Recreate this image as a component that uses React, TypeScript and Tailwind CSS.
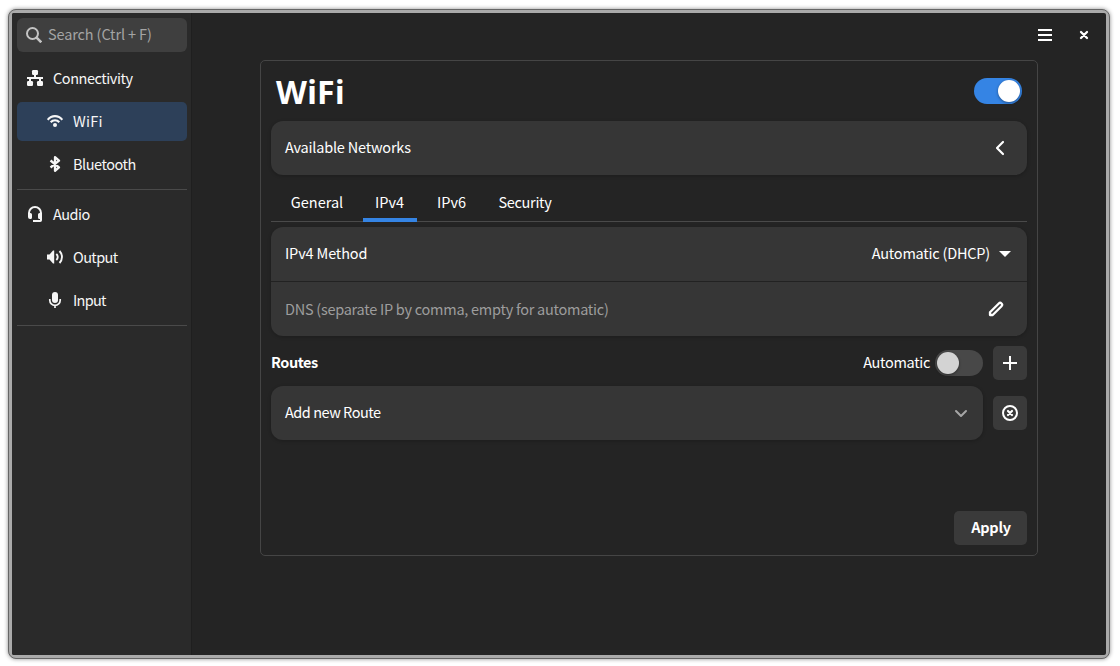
import React from 'react';

type IconProps = { children: React.ReactNode; className?: string; size?: number };

function Icon({ children, className = '', size = 16 }: IconProps) {
  return (
    <svg width={size} height={size} viewBox="0 0 16 16" fill="currentColor" className={`shrink-0 ${className}`}>
      {children}
    </svg>
  );
}

const stroke = { fill: 'none', stroke: 'currentColor' } as const;

const SearchIcon = () => (
  <Icon className="text-[#c4c4c4]">
    <g {...stroke} strokeWidth="2">
      <circle cx="6.5" cy="6.5" r="5.5" />
      <path d="M10.6 10.6 15.3 15.3" strokeWidth="2.6" />
    </g>
  </Icon>
);

const NetworkIcon = () => (
  <Icon>
    <rect x="5" y="0" width="6" height="5" rx="1.2" />
    <rect x="0" y="11" width="6" height="5" rx="1.2" />
    <rect x="10" y="11" width="6" height="5" rx="1.2" />
    <path d="M7 4h2v3h7v2h-2v3h-2V9H4v3H2V9H0V7h7z" />
  </Icon>
);

const WifiIcon = () => (
  <Icon>
    <path {...stroke} strokeWidth="2.1" d="M.7 6.8C4.6 1.9 11.4 1.9 15.3 6.8M3.7 9.3c2.3-2.7 6.3-2.7 8.6 0" />
    <circle cx="8" cy="12" r="2" />
  </Icon>
);

const BluetoothIcon = () => (
  <Icon>
    <path {...stroke} strokeWidth="2.3" strokeLinejoin="round" d="M3.5 4.5 12 11.3 8 14.8V1.2l4 3.5-8.5 6.8" />
  </Icon>
);

const HeadsetIcon = () => (
  <Icon>
    <path {...stroke} strokeWidth="2" d="M2 9V7a6 6 0 0 1 12 0v7.2a.8.8 0 0 1-.8.8H6" />
    <path d="M1 7h2.5A1.5 1.5 0 0 1 5 8.5v3A1.5 1.5 0 0 1 3.5 13H3a2 2 0 0 1-2-2zM15 7h-2.5A1.5 1.5 0 0 0 11 8.5v3a1.5 1.5 0 0 0 1.5 1.5H15z" />
  </Icon>
);

const SpeakerIcon = () => (
  <Icon>
    <path d="M0 5.5h2.5L6 1.5h1.2v13H6l-3.5-4H0z" />
    <path {...stroke} strokeWidth="1.9" d="M9.3 5c1.9 1.8 1.9 4.2 0 6M12.500 2c3.3 3.5 3.3 8.5 0 12" />
  </Icon>
);

const MicIcon = () => (
  <Icon>
    <rect x="5" y="0" width="6" height="11" rx="3" />
    <path {...stroke} strokeWidth="1.7" d="M2.8 7v1.2a5.2 5.2 0 0 0 10.4 0V7M8 13v3" />
  </Icon>
);

const MenuIcon = () => (
  <Icon>
    <path d="M1 2h14v2H1zM1 7h14v2H1zM1 12h14v2H1z" />
  </Icon>
);

const CloseIcon = () => (
  <Icon>
    <path {...stroke} strokeWidth="2.3" strokeLinecap="round" d="m5 5 6 6M11 5l-6 6" />
  </Icon>
);

const ChevronLeftIcon = () => (
  <Icon>
    <path {...stroke} strokeWidth="2.2" strokeLinecap="round" strokeLinejoin="round" d="M11 2 5 8l6 6" />
  </Icon>
);

const CaretIcon = () => (
  <Icon>
    <path d="M2 5h12l-6 6z" />
  </Icon>
);

const PencilIcon = () => (
  <Icon>
    <path {...stroke} strokeWidth="2.3" strokeLinejoin="round" d="M2 14v-2.7L10.8 2.5a1.9 1.9 0 0 1 2.7 2.7L4.7 14z" />
  </Icon>
);

const PlusIcon = () => (
  <Icon>
    <path d="M7 1h2v6h6v2H9v6H7V9H1V7h6z" />
  </Icon>
);

const ChevronDownIcon = () => (
  <Icon className="text-[#a6a6a6]">
    <path {...stroke} strokeWidth="2" strokeLinecap="round" strokeLinejoin="round" d="m3 6 5 5 5-5" />
  </Icon>
);

const RemoveIcon = () => (
  <Icon>
    <circle {...stroke} strokeWidth="2" cx="8" cy="8" r="7" />
    <path {...stroke} strokeWidth="2.2" strokeLinecap="round" d="m6 6 4 4M10 6l-4 4" />
  </Icon>
);

function NavItem({
  icon,
  label,
  child,
  active,
  tracking,
}: {
  icon: React.ReactNode;
  label: string;
  child?: boolean;
  active?: boolean;
  tracking: string;
}) {
  return (
    <div
      className={`flex h-[39px] items-center gap-[10px] rounded-[5px] pb-px ${child ? 'pl-[30px]' : 'pl-[10px]'} ${active ? 'bg-[#2d4059]' : ''}`}
    >
      {icon}
      <span className={`pb-px ${tracking}`}>{label}</span>
    </div>
  );
}

function Switch({ on }: { on?: boolean }) {
  return (
    <div className={`flex h-[26px] w-12 items-center rounded-full px-[2px] ${on ? 'justify-end bg-[#3584e4]' : 'bg-[#484848]'}`}>
      <div className={`size-[22px] rounded-full shadow-[0_1px_3px_rgba(0,0,0,0.4)] ${on ? 'bg-white' : 'bg-[#d3d3d3]'}`} />
    </div>
  );
}

const card = 'rounded-xl bg-[#363636] shadow-[0_1px_3px_1px_rgba(0,0,0,0.14)]';

export default function App() {
  return (
    <div className="h-[666px] w-[1120px] overflow-hidden bg-white pt-[9px] pl-2 font-['Noto_Sans_CJK_JP','Noto_Sans',sans-serif] text-[14.5px] leading-5 whitespace-nowrap text-[#f6f6f6]">
      <div className="h-[650px] w-[1102px] rounded-[8px] border border-[#666] bg-[#aaa] p-[3px] shadow-[0_0_4px_rgba(0,0,0,0.45)]">
        <div className="flex h-full overflow-hidden rounded-[2px] bg-[#242424]">
          <aside className="w-[180px] border-r border-[#1f1f1f] bg-[#2a2a2a] pt-[5px] pr-1 pl-[5px]">
            <div className="flex h-[34px] items-center gap-[6px] rounded-[6px] bg-[#3f3f3f] pl-[9px] text-[#a4a4a4]">
              <SearchIcon />
              <span className="pb-[2px] tracking-[-0.13px]">Search (Ctrl + F)</span>
            </div>
            <nav className="flex flex-col gap-1 pt-[7px]">
              <NavItem icon={<NetworkIcon />} label="Connectivity" tracking="tracking-[-0.45px]" />
              <NavItem icon={<WifiIcon />} label="WiFi" tracking="tracking-[0.25px]" child active />
              <NavItem icon={<BluetoothIcon />} label="Bluetooth" tracking="tracking-[-0.48px]" child />
              <div className="mt-px mb-px h-px bg-[#4a4a4a]" />
              <NavItem icon={<HeadsetIcon />} label="Audio" tracking="tracking-[-0.5px]" />
              <NavItem icon={<SpeakerIcon />} label="Output" tracking="tracking-[-0.6px]" child />
              <NavItem icon={<MicIcon />} label="Input" tracking="tracking-[-0.7px]" child />
              <div className="mt-px h-px bg-[#4a4a4a]" />
            </nav>
          </aside>
          <main className="flex-1 text-white">
            <header className="flex h-[47px] items-center justify-end gap-[23px] pr-[14px] pb-[3px]">
              <MenuIcon />
              <CloseIcon />
            </header>
            <section className="ml-[68px] flex h-[496px] w-[778px] flex-col rounded-[5px] border border-[#454545] px-[10px]">
              <div className="flex h-[60px] items-center justify-between pr-[5px] pl-[5px]">
                <h1 className="font-['Noto_Sans',sans-serif] text-[32px] leading-[58px] font-bold tracking-[0.3px] pt-px">WiFi</h1>
                <Switch on />
              </div>
              <div className={`flex h-[54px] items-center justify-between pr-[19px] pl-[14px] ${card}`}>
                <span className="pb-[2px] tracking-[-0.2px]">Available Networks</span>
                <ChevronLeftIcon />
              </div>
              <div className="mt-2 flex h-[39px] gap-2 border-b border-[#4a4a4a] pl-2">
                <div className="w-[76px] pt-[9px] text-center">General</div>
                <div className="-mb-px h-[39px] w-[54px] border-b-4 border-[#3584e4] pt-[9px] pr-px text-center">IPv4</div>
                <div className="w-[54px] pt-[9px] pr-px text-center">IPv6</div>
                <div className="w-[78px] pt-[9px] pr-[2px] text-center tracking-[-0.3px]">Security</div>
              </div>
              <div className={`mt-[5px] ${card}`}>
                <div className="flex h-[55px] items-center justify-between border-b border-[#222] pr-[14px] pl-[14px]">
                  <span className="pb-[2px] tracking-[-0.15px]">IPv4 Method</span>
                  <div className="flex items-center gap-[7px]">
                    <span className="pb-[2px] tracking-[-0.22px]">Automatic (DHCP)</span>
                    <CaretIcon />
                  </div>
                </div>
                <div className="flex h-[54px] items-center justify-between pr-[23px] pl-[14px]">
                  <span className="tracking-[-0.265px] text-[#9d9d9d]">DNS (separate IP by comma, empty for automatic)</span>
                  <PencilIcon />
                </div>
              </div>
              <div className="mt-[10px] flex h-[34px] items-center">
                <span className="pb-[2px] font-bold tracking-[-0.45px]">Routes</span>
                <span className="mr-[5px] ml-auto pb-[2px] tracking-[-0.33px]">Automatic</span>
                <Switch />
                <button className="ml-[10px] flex size-[34px] items-center justify-center rounded-[5px] bg-[#3a3a3a]">
                  <PlusIcon />
                </button>
              </div>
              <div className="mt-[6px] flex items-center gap-[10px]">
                <div className={`flex h-[54px] flex-1 items-center justify-between pr-[14px] pl-[14px] ${card}`}>
                  <span className="pb-[2px] tracking-[-0.47px]">Add new Route</span>
                  <ChevronDownIcon />
                </div>
                <button className="flex size-[34px] items-center justify-center rounded-[5px] bg-[#3a3a3a]">
                  <RemoveIcon />
                </button>
              </div>
              <button className="mt-auto mb-[10px] h-[34px] w-[73px] self-end rounded-[5px] bg-[#3a3a3a] pb-[2px] pl-px font-bold tracking-[-0.25px]">
                Apply
              </button>
            </section>
          </main>
        </div>
      </div>
    </div>
  );
}
